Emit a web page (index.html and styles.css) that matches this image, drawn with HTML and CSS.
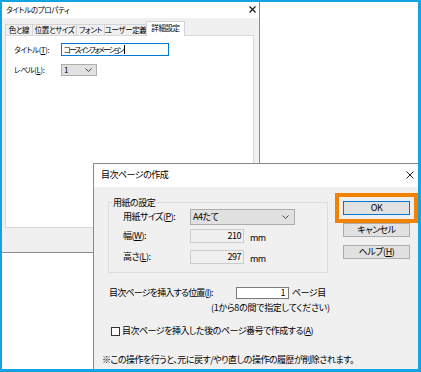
FILE: index.html
```html
<!DOCTYPE html>
<html lang="ja">
<head>
<meta charset="utf-8">
<title>目次ページの作成</title>
<link rel="stylesheet" href="styles.css">
</head>
<body>
<div class="screen">
  <section class="win props">
    <header class="props-titlebar">
      <span class="title">タイトルのプロパティ</span>
      <svg class="close-sm" width="7" height="7" viewBox="0 0 7 7"><path d="M0.5 0.5 L6.5 6.5 M6.5 0.5 L0.5 6.5" stroke="#222" stroke-width="1.3" fill="none"/></svg>
    </header>
    <div class="props-body">
      <nav class="tabs">
        <span class="tab t1">色と線</span>
        <span class="tab t2">位置とサイズ</span>
        <span class="tab t3">フォント</span>
        <span class="tab t4">ユーザー定義</span>
        <span class="tab t5 active">詳細設定</span>
      </nav>
      <div class="panel">
        <div class="prow">
          <span class="plabel">タイトル(<u>T</u>):</span>
          <div class="edit focused"><span class="edit-text">コースインフォメーション</span><span class="caret"></span></div>
        </div>
        <div class="prow prow2">
          <span class="plabel">レベル(<u>L</u>):</span>
          <div class="combo combo-sm"><span>1</span><svg width="7" height="4" viewBox="0 0 7 4"><path d="M0.5 0.5 L3.5 3.5 L6.5 0.5" stroke="#444" fill="none"/></svg></div>
        </div>
      </div>
    </div>
  </section>

  <section class="win toc">
    <header class="toc-titlebar">
      <span class="title">目次ページの作成</span>
      <svg class="close-lg" width="8" height="8" viewBox="0 0 8 8"><path d="M0.5 0.5 L7.5 7.5 M7.5 0.5 L0.5 7.5" stroke="#222" stroke-width="1" fill="none"/></svg>
    </header>
    <div class="toc-body">
      <div class="toc-top">
        <div class="main">
          <fieldset class="group">
            <legend>用紙の設定</legend>
            <div class="grow">
              <span class="glabel">用紙サイズ(<u>P</u>):</span>
              <div class="combo combo-lg"><span>A4たて</span><svg width="7" height="4" viewBox="0 0 7 4"><path d="M0.5 0.5 L3.5 3.5 L6.5 0.5" stroke="#444" fill="none"/></svg></div>
            </div>
            <div class="grow grow2">
              <span class="glabel">幅(<u>W</u>):</span>
              <div class="unit"><div class="ro">210</div><span class="mm">mm</span></div>
            </div>
            <div class="grow grow3">
              <span class="glabel">高さ(<u>L</u>):</span>
              <div class="unit"><div class="ro">297</div><span class="mm">mm</span></div>
            </div>
          </fieldset>
          <div class="pos-row">
            <span class="pos-label">目次ページを挿入する位置(<u>I</u>):</span>
            <div class="num">1</div>
            <span class="suffix">ページ目</span>
          </div>
          <div class="hint">(1から8の間で指定してください)</div>
          <div class="check-row">
            <span class="checkbox"></span>
            <span class="check-text">目次ページを挿入した後のページ番号で作成する(<u>A</u>)</span>
          </div>
        </div>
        <div class="buttons">
          <div class="btn default">OK</div>
          <div class="btn">キャンセル</div>
          <div class="btn">ヘルプ(<u>H</u>)</div>
        </div>
      </div>
      <p class="note">※この操作を行うと、元に戻す/やり直しの操作の履歴が削除されます。</p>
    </div>
  </section>
</div>
</body>
</html>
```

FILE: styles.css
```css
* { box-sizing: border-box; }
html, body { margin: 0; padding: 0; background: #fff; }
body {
  font-family: "Noto Sans CJK JP", "Noto Sans", sans-serif;
  font-size: 9px;
  line-height: 12px;
  color: #000;
  font-feature-settings: "palt";
  white-space: nowrap;
}
u { text-underline-offset: 1px; }

.screen {
  width: 421px;
  height: 372px;
  border-style: solid;
  border-color: #13a3e3;
  border-width: 2px 3px 3px 2px;
  position: relative;
  overflow: hidden;
  background: #fff;
}

.win { position: absolute; background: #f0f0f0; }

/* ---------- property window ---------- */
.props {
  left: 0;
  top: 0;
  width: 258px;
  height: 251px;
  border-right: 1px solid #8c8c8c;
  border-bottom: 1px solid #8c8c8c;
  display: flex;
  flex-direction: column;
  font-size: 7.5px;
  letter-spacing: -0.3px;
}
.props-titlebar {
  height: 16px;
  background: #fff;
  display: flex;
  align-items: center;
  justify-content: space-between;
  padding: 0 3px 1px 4px;
}
.props-body {
  padding: 4px 4px 0 3px;
  display: flex;
  flex-direction: column;
}
.tabs {
  display: flex;
  align-items: flex-end;
  height: 13px;
}
.tab {
  height: 11px;
  border: 1px solid #d4d4d4;
  border-bottom: none;
  background: #f0f0f0;
  display: flex;
  align-items: center;
  justify-content: center;
  line-height: 10px;
  margin-left: -1px;
  letter-spacing: -0.4px;
}
.t1 { width: 28px; margin-left: 0; }
.t2 { width: 45px; }
.t3 { width: 29px; }
.t4 { width: 43px; }
.t5 { width: 39px; }
.tab.active {
  height: 15px;
  margin-bottom: -1px;
  background: #fff;
  position: relative;
  z-index: 1;
  padding-bottom: 2px;
}
.panel {
  width: 249px;
  height: 193px;
  background: #fff;
  border: 1px solid #d9d9d9;
  padding: 7px 0 0 8px;
}
.prow { display: flex; align-items: center; }
.prow2 { margin-top: 8px; }
.plabel { width: 47px; }
.edit {
  width: 108px;
  height: 13px;
  border: 1px solid #0078d7;
  background: #fff;
  padding-left: 2px;
  display: flex;
  align-items: center;
  line-height: 11px;
}
.edit-text { letter-spacing: -1.7px; }
.caret {
  display: inline-block;
  width: 1px;
  height: 9px;
  margin-left: 1px;
  background: #000;
}
.combo {
  background: #e1e1e1;
  border: 1px solid #adadad;
  display: flex;
  align-items: center;
  justify-content: space-between;
  padding: 0 4px 0 2px;
  line-height: 10px;
}
.combo-sm { width: 36px; height: 12px; font-size: 8px; }
.combo-lg { width: 105px; height: 16px; padding-right: 5px; }

/* ---------- TOC dialog ---------- */
.toc {
  left: 91px;
  top: 161px;
  width: 327px;
  height: 215px;
  border-left: 1px solid #888;
  border-top: 1px solid #888;
  letter-spacing: -0.5px;
}
.toc-titlebar {
  height: 23px;
  background: #fff;
  display: flex;
  align-items: center;
  justify-content: space-between;
  padding: 0 6px 2px 7px;
}
.toc-top {
  display: flex;
  gap: 15px;
  padding: 10px 0 0 14px;
}
.main { width: 220px; }
.group {
  margin: 0;
  width: 220px;
  border: 1px solid #dcdcdc;
  padding: 1px 0 7px 3px;
}
.group legend {
  padding: 0 1px;
  line-height: 11px;
}
.grow {
  display: grid;
  grid-template-columns: 67px auto;
  align-items: center;
  margin-left: 11px;
}
.grow2 { margin-top: 3px; }
.grow3 { margin-top: 5px; }
.unit { display: flex; align-items: center; }
.ro {
  width: 54px;
  height: 14px;
  border: 1px solid #cccccc;
  background: #f0f0f0;
  text-align: right;
  padding-right: 2px;
  line-height: 12px;
}
.mm { margin-left: 6px; margin-top: 4px; }

.pos-row {
  display: flex;
  align-items: center;
  margin-top: 14px;
  margin-left: 1px;
}
.pos-label { width: 127px; letter-spacing: -0.8px; }
.num {
  width: 53px;
  height: 12px;
  border: 1px solid #7a7a7a;
  background: #fff;
  text-align: right;
  padding-right: 3px;
  line-height: 10px;
}
.suffix { margin-left: 3px; }
.hint { margin: 3px 0 0 103px; letter-spacing: -0.3px; }
.check-row {
  display: flex;
  align-items: center;
  margin: 11px 0 0 3px;
}
.checkbox {
  width: 9px;
  height: 9px;
  border: 1px solid #333;
  background: #fff;
}
.check-text { margin-left: 2px; }

.buttons {
  width: 67px;
  margin-top: 4px;
  display: flex;
  flex-direction: column;
  gap: 8px;
}
.btn {
  height: 14px;
  background: #e1e1e1;
  border: 1px solid #adadad;
  display: flex;
  align-items: center;
  justify-content: center;
  line-height: 10px;
}
.btn.default {
  border-color: #0078d7;
  outline: 4px solid #f08300;
  outline-offset: 4px;
}
.note {
  margin: 17px 0 0 8px;
}
```
